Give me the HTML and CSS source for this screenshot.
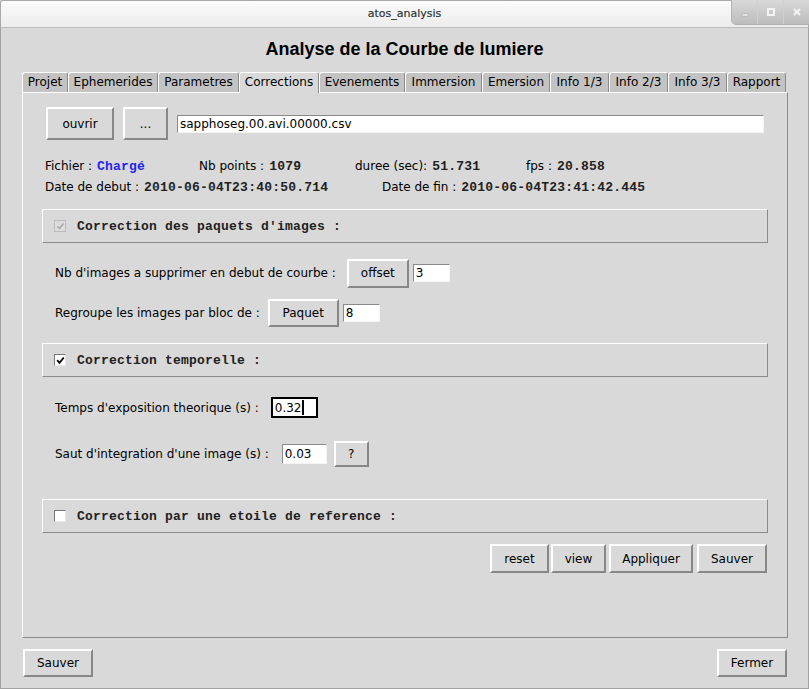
FILE: index.html
```html
<!DOCTYPE html>
<html>
<head>
<meta charset="utf-8">
<link rel="stylesheet" href="styles.css">
</head>
<body>
<div class="window">
  <div class="titlebar">
    <div class="tb-spacer"></div>
    <div class="tb-title">atos_analysis</div>
    <div class="tb-controls">
      <div class="tb-btn"><svg width="10" height="10" viewBox="0 0 10 10"><rect x="2" y="7" width="6" height="2" fill="#f4f4f4" stroke="#a8a8a8" stroke-width="0.5"/></svg></div>
      <div class="tb-btn"><svg width="10" height="10" viewBox="0 0 10 10"><rect x="2" y="2" width="6" height="6" fill="none" stroke="#f4f4f4" stroke-width="2"/></svg></div>
      <div class="tb-btn"><svg width="10" height="10" viewBox="0 0 10 10"><path d="M2 2 L8 8 M8 2 L2 8" stroke="#f4f4f4" stroke-width="2"/></svg></div>
    </div>
  </div>
  <div class="client">
    <h1 class="heading">Analyse de la Courbe de lumiere</h1>
    <div class="tabs">
      <div class="tab t1">Projet</div>
      <div class="tab t2">Ephemerides</div>
      <div class="tab t3">Parametres</div>
      <div class="tab t4 active">Corrections</div>
      <div class="tab t5">Evenements</div>
      <div class="tab t6">Immersion</div>
      <div class="tab t7">Emersion</div>
      <div class="tab t8">Info 1/3</div>
      <div class="tab t8">Info 2/3</div>
      <div class="tab t8">Info 3/3</div>
      <div class="tab t8">Rapport</div>
    </div>
    <div class="panel">
      <div class="file-row">
        <button class="btn b-ouvrir">ouvrir</button>
        <button class="btn b-dots">...</button>
        <div class="field f-file">sapphoseg.00.avi.00000.csv</div>
      </div>
      <div class="info-row r1">
        <div class="cell c1"><span>Fichier :</span><span class="val blue">Chargé</span></div>
        <div class="cell c2"><span>Nb points :</span><span class="val">1079</span></div>
        <div class="cell c3"><span>duree (sec):</span><span class="val">51.731</span></div>
        <div class="cell"><span>fps :</span><span class="val">20.858</span></div>
      </div>
      <div class="info-row r2">
        <div class="cell c4"><span>Date de debut :</span><span class="val">2010-06-04T23:40:50.714</span></div>
        <div class="cell"><span>Date de fin :</span><span class="val">2010-06-04T23:41:42.445</span></div>
      </div>

      <div class="section s1">
        <span class="check disabled"><svg width="9" height="9" viewBox="0 0 9 9"><path d="M1.5 4.5 L3.5 6.5 L7.5 1.5" fill="none" stroke="#a6a6a6" stroke-width="1.5"/></svg></span>
        <span class="sec-title">Correction des paquets d'images :</span>
      </div>
      <div class="form-row fr-offset">
        <span class="lbl lbl-offset">Nb d'images a supprimer en debut de courbe :</span>
        <button class="btn b-offset">offset</button>
        <div class="field f-small">3</div>
      </div>
      <div class="form-row fr-paquet">
        <span class="lbl">Regroupe les images par bloc de :</span>
        <button class="btn b-paquet">Paquet</button>
        <div class="field f-small">8</div>
      </div>

      <div class="section s2">
        <span class="check on"><svg width="9" height="9" viewBox="0 0 9 9"><path d="M1.2 4.2 L3.5 6.8 L7.8 1.5" fill="none" stroke="#000" stroke-width="1.8"/></svg></span>
        <span class="sec-title">Correction temporelle :</span>
      </div>
      <div class="form-row fr-temps">
        <span class="lbl lbl-temps">Temps d'exposition theorique (s) :</span>
        <div class="field f-focus">0.32<span class="caret"></span></div>
      </div>
      <div class="form-row fr-saut">
        <span class="lbl lbl-saut">Saut d'integration d'une image (s) :</span>
        <div class="field f-saut">0.03</div>
        <button class="btn b-q">?</button>
      </div>

      <div class="section s3">
        <span class="check on"></span>
        <span class="sec-title">Correction par une etoile de reference :</span>
      </div>
      <div class="action-row">
        <button class="btn b-reset">reset</button>
        <button class="btn b-view">view</button>
        <button class="btn b-appl">Appliquer</button>
        <button class="btn b-sauv">Sauver</button>
      </div>
    </div>
    <div class="footer">
      <button class="btn b-foot">Sauver</button>
      <button class="btn b-foot">Fermer</button>
    </div>
  </div>
</div>
</body>
</html>
```

FILE: styles.css
```css
html, body {
  margin: 0;
  padding: 0;
  background: #d9d9d9;
}
.window {
  width: 809px;
  height: 689px;
  display: flex;
  flex-direction: column;
  overflow: hidden;
}
.titlebar {
  height: 28px;
  box-sizing: border-box;
  display: grid;
  grid-template-columns: 77px 1fr 77px;
  background: linear-gradient(#fbfbfb, #ececec);
  border: 1px solid #a9a9a9;
  border-bottom: 1px solid #bdbdbd;
  border-radius: 3px 3px 0 0;
}
.tb-title {
  text-align: center;
  font-family: "DejaVu Sans", sans-serif;
  font-size: 11px;
  line-height: 26px;
  color: #2e3436;
  -webkit-text-stroke: 0.2px #2e3436;
}
.tb-controls {
  display: flex;
  height: 24px;
  margin-top: -1px;
  margin-right: -1px;
  background: linear-gradient(#d8d8d8, #bdbdbd);
  border-left: 1px solid #b4b4b4;
  border-bottom: 1px solid #b0b0b0;
  border-bottom-left-radius: 5px;
}
.tb-btn {
  flex: 1;
  display: flex;
  align-items: center;
  justify-content: center;
  border-left: 1px solid #d0d0d0;
}
.tb-btn:first-child { border-left: none; }

.client {
  flex: 1;
  display: flex;
  flex-direction: column;
  border: 1px solid #a2a2a2;
  border-top: none;
  background: #d9d9d9;
  font-family: "DejaVu Sans", sans-serif;
  font-size: 12px;
  color: #000;
}
.heading {
  margin: 11px 0 0 0;
  font-family: "Liberation Sans", Arial, sans-serif;
  font-weight: bold;
  font-size: 18px;
  line-height: 21px;
  text-align: center;
  color: #000;
}
.tabs {
  display: flex;
  align-items: flex-end;
  margin: 12px 0 0 21px;
  height: 20px;
}
.tab {
  box-sizing: border-box;
  height: 20px;
  line-height: 19px;
  padding: 0 4px;
  background: #c3c3c3;
  border-top: 1px solid #fff;
  border-left: 1px solid #fff;
  border-right: 1px solid #8a8a8a;
  border-radius: 3px 3px 0 0;
  white-space: nowrap;
  text-align: center;
}
.t1 { width: 46px; }
.t2 { width: 90px; }
.t3 { width: 81px; }
.t4 { width: 80px; }
.t5 { width: 86px; }
.t6 { width: 77px; }
.t7 { width: 68px; }
.t8 { width: 59px; }
.tab.active {
  background: #d9d9d9;
  height: 21px;
  margin-bottom: -1px;
  position: relative;
  z-index: 1;
}
.panel {
  box-sizing: border-box;
  height: 546px;
  margin: 0 20px 0 21px;
  padding: 14px 19px 0 19px;
  border: 1px solid;
  border-color: #fff #8a8a8a #8a8a8a #fff;
  display: flex;
  flex-direction: column;
}
.btn {
  box-sizing: border-box;
  background: #d9d9d9;
  border: 2px solid;
  border-color: #fff #878787 #878787 #fff;
  font-family: "DejaVu Sans", sans-serif;
  font-size: 12px;
  color: #000;
  padding: 0;
  margin: 0;
  text-align: center;
}
.field {
  box-sizing: border-box;
  background: #fff;
  border: 1px solid;
  border-color: #8a8a8a #f4f4f4 #f4f4f4 #8a8a8a;
  padding: 0 2px;
  white-space: nowrap;
  display: flex;
  align-items: center;
}
.file-row {
  display: flex;
  align-items: center;
  height: 33px;
  margin: 0 4px;
}
.b-ouvrir { width: 68px; height: 33px; margin-right: 9px; }
.b-dots { width: 45px; height: 33px; margin-right: 9px; }
.f-file { flex: 1; height: 18px; }

.info-row {
  display: flex;
  align-items: center;
  height: 20px;
  margin-left: 3px;
  white-space: nowrap;
}
.r1 { margin-top: 16px; }
.r2 { margin-top: 1px; }
.cell { display: flex; align-items: center; }
.c1 { width: 154px; }
.c2 { width: 156px; }
.c3 { width: 171px; }
.c4 { width: 337px; }
.val {
  font-family: "Liberation Mono", "Courier New", monospace;
  font-weight: bold;
  font-size: 13px;
  letter-spacing: 0.2px;
  margin-left: 5px;
  color: #222;
}
.val.blue { color: #2424f0; }

.section {
  box-sizing: border-box;
  height: 34px;
  border: 1px solid;
  border-color: #fff #8a8a8a #8a8a8a #fff;
  display: flex;
  align-items: center;
  padding-left: 11px;
}
.s1 { margin-top: 12px; }
.s2 { margin-top: 16px; }
.s3 { margin-top: 32px; }
.check {
  box-sizing: border-box;
  width: 12px;
  height: 12px;
  display: flex;
  align-items: center;
  justify-content: center;
  margin-right: 11px;
}
.check.disabled {
  border: 1px solid #bdbdbd;
  background: #dcdcdc;
}
.check.on {
  background: #fff;
  border: 1px solid;
  border-color: #7a7a7a #e8e8e8 #e8e8e8 #7a7a7a;
}
.sec-title {
  font-family: "Liberation Mono", "Courier New", monospace;
  font-weight: bold;
  font-size: 13px;
  letter-spacing: 0.2px;
  color: #222;
  white-space: nowrap;
}

.form-row {
  display: flex;
  align-items: center;
  margin-left: 13px;
  white-space: nowrap;
}
.lbl { margin-right: 8px; }
.lbl-offset { margin-right: 11px; }
.lbl-temps { margin-right: 12px; }
.lbl-saut { margin-right: 13px; }
.fr-offset { margin-top: 16px; height: 28px; }
.fr-paquet { margin-top: 12px; height: 28px; }
.b-offset { width: 62px; height: 29px; margin-right: 4px; }
.b-paquet { width: 71px; height: 28px; margin-right: 4px; }
.f-small { width: 37px; height: 18px; }

.fr-temps { margin-top: 20px; height: 21px; }
.f-focus {
  width: 47px;
  height: 21px;
  border: 2px solid #000;
  padding-left: 2px;
}
.caret {
  display: inline-block;
  width: 2px;
  height: 15px;
  background: #000;
}
.fr-saut { margin-top: 23px; height: 26px; }
.f-saut { width: 45px; height: 20px; margin-right: 7px; }
.b-q { width: 35px; height: 26px; }

.action-row {
  display: flex;
  justify-content: flex-end;
  margin-top: 11px;
  margin-right: 1px;
  height: 29px;
}
.action-row .btn { height: 29px; }
.b-reset { width: 59px; margin-right: 2px; }
.b-view { width: 55px; margin-right: 3px; }
.b-appl { width: 84px; margin-right: 4px; }
.b-sauv { width: 70px; }

.footer {
  display: flex;
  justify-content: space-between;
  margin: 11px 21px 0 22px;
}
.b-foot { width: 70px; height: 28px; }
```
